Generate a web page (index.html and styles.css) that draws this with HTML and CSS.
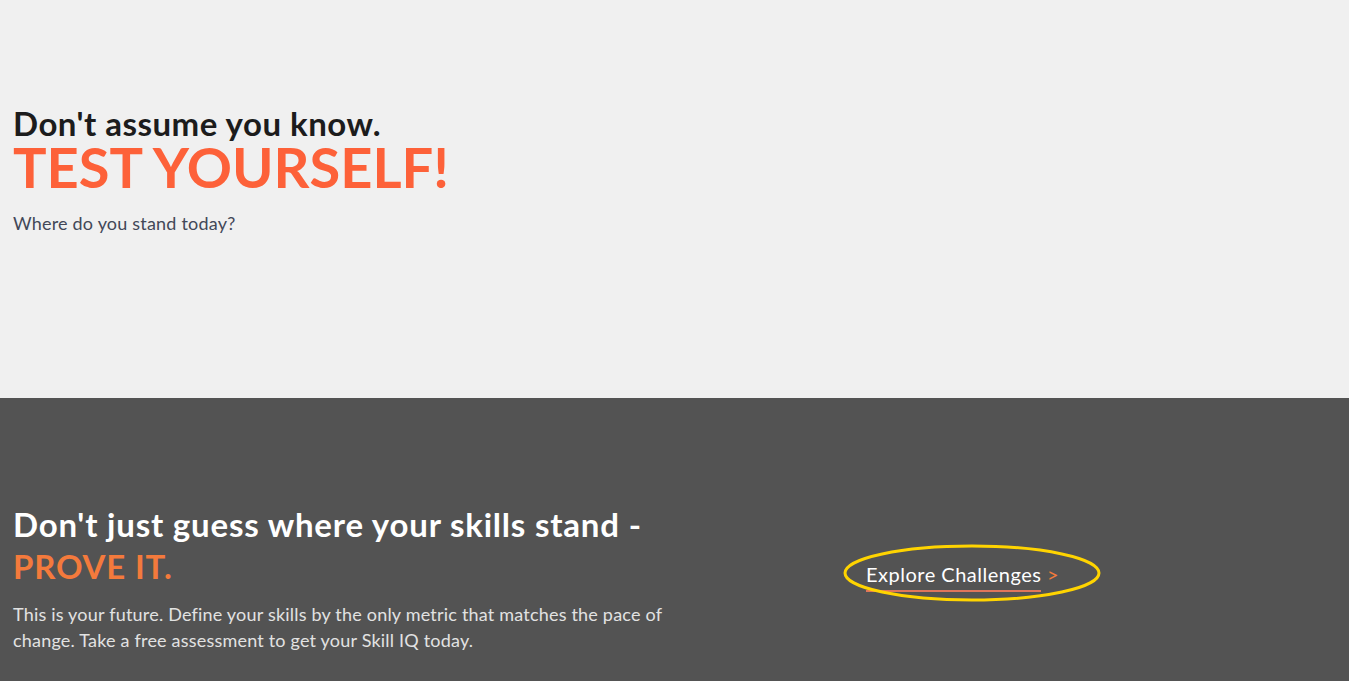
FILE: index.html
```html
<!DOCTYPE html>
<html>
<head>
<meta charset="utf-8">
<link rel="stylesheet" href="styles.css">
</head>
<body>
<section class="hero">
  <h1 class="hero-title"><span class="hero-lead">Don't assume you know.</span><span class="hero-big">TEST YOURSELF!</span></h1>
  <p class="hero-sub">Where do you stand today?</p>
</section>
<section class="prove">
  <div class="prove-text">
    <h2 class="prove-title">Don't just guess where your skills stand -<br><span class="accent">PROVE IT.</span></h2>
    <p class="prove-body">This is your future. Define your skills by the only metric that matches the pace of change. Take a free assessment to get your Skill IQ today.</p>
  </div>
  <div class="prove-cta">
    <a class="cta-link" href="#"><span class="cta-label">Explore Challenges</span> <span class="cta-arrow">&gt;</span></a>
    <svg class="cta-ring" width="260" height="60" viewBox="0 0 260 60"><ellipse cx="130" cy="30" rx="127" ry="27" fill="none" stroke="#ffd400" stroke-width="3"/></svg>
  </div>
</section>
</body>
</html>
```
FILE: styles.css
```css
* { box-sizing: border-box; }
html, body { margin: 0; padding: 0; }
body { font-family: Lato, "Open Sans", sans-serif; background: #535353; overflow: hidden; }
.hero { background: #f0f0f0; height: 398px; padding: 105px 13px 0; }
.hero-title { margin: 0; font-weight: 700; }
.hero-lead { display: block; font-size: 33px; line-height: 36px; letter-spacing: 0.5px; color: #1c1c1c; }
.hero-big { display: block; font-size: 56px; line-height: 52px; color: #fd6139; }
.hero-sub { margin: 18px 0 0; font-size: 18px; line-height: 24px; letter-spacing: 0.2px; color: #424858; }
.prove { height: 283px; display: flex; align-items: flex-start; padding: 105px 13px 0; }
.prove-text { width: 680px; flex: none; }
.prove-title { margin: 0; font-size: 33px; line-height: 42px; letter-spacing: 0.8px; font-weight: 700; color: #fff; }
.accent { color: #f47a3c; font-weight: 700; }
.prove-body { margin: 14px 0 0; font-size: 18px; line-height: 26px; letter-spacing: 0.2px; color: #e2e2e2; }
.prove-cta { position: relative; margin-left: 173px; margin-top: 59px; }
.cta-link { text-decoration: none; font-size: 20px; letter-spacing: 0.5px; color: #fff; position: relative; }
.cta-label { border-bottom: 2px solid #e0755a; padding-bottom: 4px; }
.cta-arrow { color: #f47a3c; }
.cta-ring { position: absolute; left: -24px; top: -19px; pointer-events: none; }
```
